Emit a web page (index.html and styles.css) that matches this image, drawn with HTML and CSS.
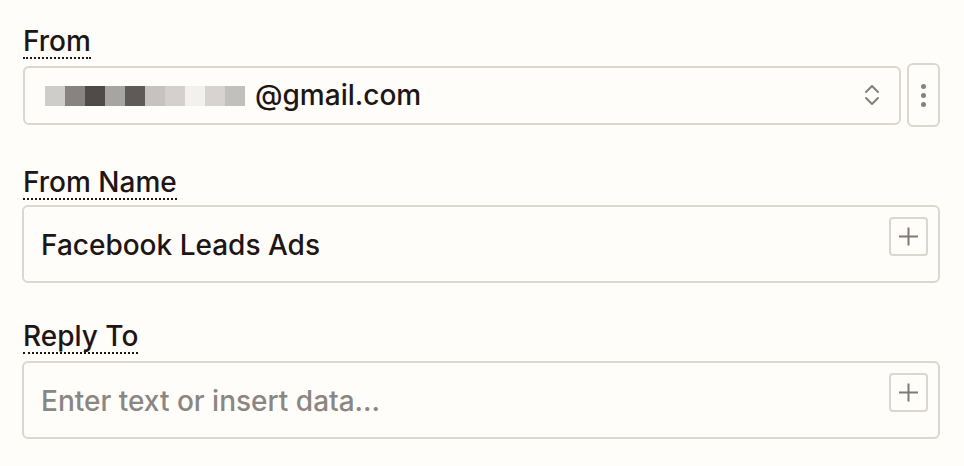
FILE: index.html
```html
<!DOCTYPE html>
<html lang="en">
<head>
<meta charset="utf-8">
<title>Email fields</title>
<link rel="stylesheet" href="styles.css">
</head>
<body>
<div class="form">
  <div class="field field-from">
    <div class="label-row"><span class="label">From</span></div>
    <div class="select-row">
      <div class="select">
        <span class="email">
          <span class="px px1"></span><span class="px px2"></span><span class="px px3"></span><span class="px px4"></span><span class="px px5"></span><span class="px px6"></span><span class="px px7"></span><span class="px px8"></span><span class="px px9"></span><span class="px px10"></span><span class="px-gap"></span><span class="email-domain">@gmail.com</span>
        </span>
        <svg class="chevrons" width="16" height="22" viewBox="0 0 16 22" aria-hidden="true">
          <path d="M2 8 L8 2 L14 8" fill="none" stroke="#85807b" stroke-width="2" stroke-linecap="round" stroke-linejoin="round"/>
          <path d="M2 14 L8 20 L14 14" fill="none" stroke="#85807b" stroke-width="2" stroke-linecap="round" stroke-linejoin="round"/>
        </svg>
      </div>
      <button class="kebab" type="button" aria-label="More">
        <span class="dot"></span><span class="dot"></span><span class="dot"></span>
      </button>
    </div>
  </div>

  <div class="field field-name">
    <div class="label-row"><span class="label">From Name</span></div>
    <div class="textbox">
      <span class="value">Facebook Leads Ads</span>
      <button class="plus" type="button" aria-label="Insert data">
        <svg width="21" height="21" viewBox="0 0 21 21" aria-hidden="true">
          <path d="M1 10.5 H20 M10.5 1.5 V19.5" fill="none" stroke="#7f7a75" stroke-width="2"/>
        </svg>
      </button>
    </div>
  </div>

  <div class="field field-reply">
    <div class="label-row"><span class="label">Reply To</span></div>
    <div class="textbox">
      <span class="placeholder">Enter text or insert data...</span>
      <button class="plus" type="button" aria-label="Insert data">
        <svg width="21" height="21" viewBox="0 0 21 21" aria-hidden="true">
          <path d="M1 10.5 H20 M10.5 1.5 V19.5" fill="none" stroke="#7f7a75" stroke-width="2"/>
        </svg>
      </button>
    </div>
  </div>
</div>
</body>
</html>
```

FILE: styles.css
```css
* { box-sizing: border-box; }

html, body {
  margin: 0;
  padding: 0;
  background: #fffdf9;
}

body {
  font-family: Inter, "Noto Sans", "Liberation Sans", sans-serif;
  color: #201515;
}

.form {
  padding: 26px 24px 0 22px;
  display: flex;
  flex-direction: column;
}

.field-name { margin-top: 40px; }
.field-reply { margin-top: 38px; }

.label-row {
  padding-left: 1px;
  height: 34px;
}

.label {
  display: inline-block;
  font-size: 28px;
  font-weight: 500;
  line-height: 30px;
  padding-bottom: 1px;
  border-bottom: 2px dotted #201515;
}

.select-row {
  margin-top: 3px;
  display: flex;
  align-items: center;
  gap: 6px;
  height: 64px;
}

.select {
  flex: 1;
  height: 59px;
  margin-left: 1px;
  border: 2px solid #dcd7ce;
  border-radius: 6px;
  display: flex;
  align-items: center;
  justify-content: space-between;
  padding: 0 19px 0 20px;
}

.email {
  display: flex;
  align-items: center;
  font-size: 28px;
  font-weight: 500;
  line-height: 30px;
}

.px {
  display: inline-block;
  width: 20px;
  height: 20px;
  margin-top: 2px;
}
.px1 { background: #cfcdcb; }
.px2 { background: #888380; }
.px3 { background: #4f4b4a; }
.px4 { background: #a7a5a2; }
.px5 { background: #5e5a59; }
.px6 { background: #c5c2bf; }
.px7 { background: #d3d0cd; }
.px8 { background: #f2f1f0; }
.px9 { background: #d6d3d0; }
.px10 { background: #c2c0be; }
.px-gap { display: inline-block; width: 10px; }

.chevrons { display: block; }

.kebab {
  width: 33px;
  height: 64px;
  padding: 0;
  background: transparent;
  border: 2px solid #dcd7ce;
  border-radius: 6px;
  display: flex;
  flex-direction: column;
  align-items: center;
  justify-content: center;
  gap: 4px;
}

.dot {
  width: 5px;
  height: 5px;
  border-radius: 50%;
  background: #86817c;
}

.textbox {
  margin-top: 4px;
  height: 78px;
  border: 2px solid #dcd7ce;
  border-radius: 6px;
  display: flex;
  align-items: flex-start;
  justify-content: space-between;
  padding: 10px 10px 0 17px;
}

.field-reply .textbox { margin-top: 6px; }

.value, .placeholder {
  font-size: 28px;
  font-weight: 500;
  line-height: 30px;
  margin-top: 13px;
}

.placeholder { color: #8b8682; }

.plus {
  width: 39px;
  height: 39px;
  padding: 0;
  background: transparent;
  border: 2px solid #dcd7ce;
  border-radius: 4px;
  display: flex;
  align-items: center;
  justify-content: center;
}

.plus svg { display: block; }
```
